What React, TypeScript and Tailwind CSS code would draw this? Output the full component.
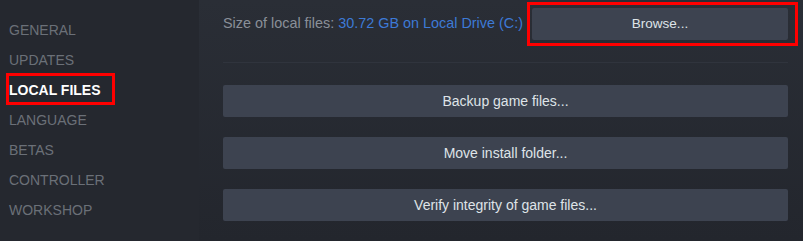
import React from "react";

const navItems = ["GENERAL", "UPDATES", "LOCAL FILES", "LANGUAGE", "BETAS", "CONTROLLER", "WORKSHOP"];

export default function App() {
  return (
    <div
      className="flex h-[241px] w-[803px] overflow-hidden bg-[#23262e]"
      style={{ fontFamily: '"Liberation Sans", Arial, sans-serif' }}
    >
      {/* Sidebar */}
      <div className="flex w-[199px] shrink-0 flex-col bg-[#25282f] pl-[9px] pt-[15px]">
        {navItems.map((item) => {
          const active = item === "LOCAL FILES";
          return (
            <div key={item} className="relative flex h-[30px] items-center">
              <span
                className={
                  active
                    ? "text-[14px] font-bold text-white"
                    : "text-[14px] text-[#6b7078]"
                }
              >
                {item}
              </span>
              {active && (
                <div className="pointer-events-none absolute left-[-3px] top-[-2px] h-[32px] w-[109px] border-[3px] border-[#ff0000]" />
              )}
            </div>
          );
        })}
      </div>

      {/* Main */}
      <div className="flex flex-1 flex-col bg-gradient-to-b from-[#2a2e36] to-[#23262d] pl-[24px] pr-[15px] pt-[8px]">
        <div className="flex h-[32px] items-center justify-between">
          <div className="text-[14.4px] text-[#8a9099]">
            Size of local files: <span className="text-[#3d7ad6]">30.72 GB on Local Drive (C:)</span>
          </div>
          <div className="relative w-[256px]">
            <button className="flex h-[32px] w-full items-center justify-center rounded-[2px] bg-[#3d4350] text-[13.5px] text-[#dfe3e8]">
              Browse...
            </button>
            <div className="pointer-events-none absolute bottom-[-6px] left-[-5px] right-[-10px] top-[-6px] border-[3px] border-[#ff0000]" />
          </div>
        </div>
        <div className="mt-[22px] h-px bg-[#30343d]" />
        <div className="mt-[22px] flex flex-col gap-[20px]">
          {["Backup game files...", "Move install folder...", "Verify integrity of game files..."].map((t) => (
            <button
              key={t}
              className="flex h-[32px] w-full items-center justify-center rounded-[2px] bg-[#3d4350] text-[14px] text-[#dfe3e8]"
            >
              {t}
            </button>
          ))}
        </div>
      </div>
    </div>
  );
}
